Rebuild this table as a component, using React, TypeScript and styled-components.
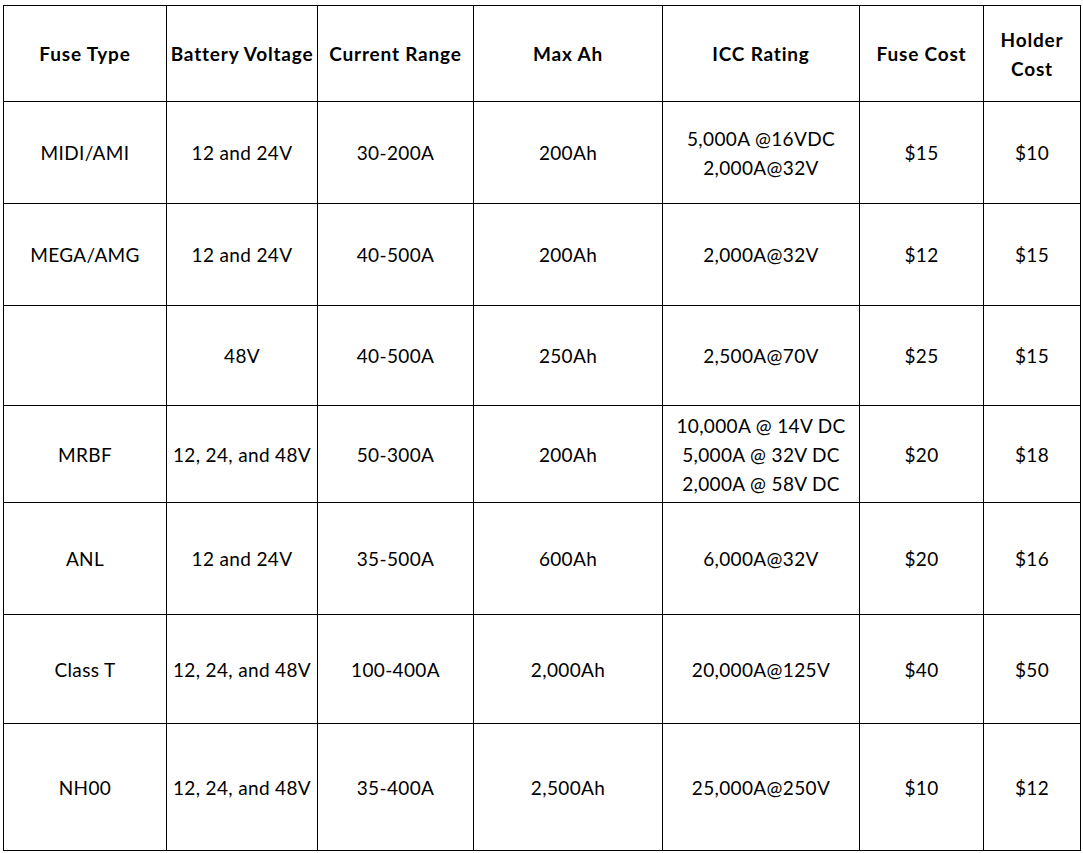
import styled, { createGlobalStyle } from "styled-components";

const GlobalStyle = createGlobalStyle`
  html, body {
    margin: 0;
    padding: 0;
    background: #ffffff;
  }
`;

type Row = {
  height: number;
  cells: string[][];
};

const widths = [163, 151, 156, 189, 197, 124, 97];

const header = [
  ["Fuse Type"],
  ["Battery Voltage"],
  ["Current Range"],
  ["Max Ah"],
  ["ICC Rating"],
  ["Fuse Cost"],
  ["Holder", "Cost"],
];

const rows: Row[] = [
  {
    height: 102,
    cells: [
      ["MIDI/AMI"],
      ["12 and 24V"],
      ["30-200A"],
      ["200Ah"],
      ["5,000A @16VDC", "2,000A@32V"],
      ["$15"],
      ["$10"],
    ],
  },
  {
    height: 102,
    cells: [
      ["MEGA/AMG"],
      ["12 and 24V"],
      ["40-500A"],
      ["200Ah"],
      ["2,000A@32V"],
      ["$12"],
      ["$15"],
    ],
  },
  {
    height: 100,
    cells: [
      [""],
      ["48V"],
      ["40-500A"],
      ["250Ah"],
      ["2,500A@70V"],
      ["$25"],
      ["$15"],
    ],
  },
  {
    height: 97,
    cells: [
      ["MRBF"],
      ["12, 24, and 48V"],
      ["50-300A"],
      ["200Ah"],
      ["10,000A @ 14V DC", "5,000A @ 32V DC", "2,000A @ 58V DC"],
      ["$20"],
      ["$18"],
    ],
  },
  {
    height: 112,
    cells: [
      ["ANL"],
      ["12 and 24V"],
      ["35-500A"],
      ["600Ah"],
      ["6,000A@32V"],
      ["$20"],
      ["$16"],
    ],
  },
  {
    height: 109,
    cells: [
      ["Class T"],
      ["12, 24, and 48V"],
      ["100-400A"],
      ["2,000Ah"],
      ["20,000A@125V"],
      ["$40"],
      ["$50"],
    ],
  },
  {
    height: 127,
    cells: [
      ["NH00"],
      ["12, 24, and 48V"],
      ["35-400A"],
      ["2,500Ah"],
      ["25,000A@250V"],
      ["$10"],
      ["$12"],
    ],
  },
];

const App = () => {
  return (
    <>
      <GlobalStyle />
      <Page>
        <Table>
          <colgroup>
            {widths.map((w, i) => (
              <Col key={i} $width={w} />
            ))}
          </colgroup>
          <thead>
            <TableRow $height={96}>
              {header.map((lines, c) => (
                <HeadCell key={c}>
                  {lines.map((line, l) => (
                    <Line key={l}>{line}</Line>
                  ))}
                </HeadCell>
              ))}
            </TableRow>
          </thead>
          <tbody>
            {rows.map((row, r) => (
              <TableRow key={r} $height={row.height}>
                {row.cells.map((lines, c) => (
                  <Cell key={c}>
                    {lines.map((line, l) => (
                      <Line key={l}>{line}</Line>
                    ))}
                  </Cell>
                ))}
              </TableRow>
            ))}
          </tbody>
        </Table>
      </Page>
    </>
  );
};

export default App;

const Page = styled.div`
  padding: 5px 0 0 3px;
  font-family: Lato, "Open Sans", sans-serif;
  color: #000000;
`;

const Table = styled.table`
  border-collapse: collapse;
  table-layout: fixed;
  width: 1077px;
`;

const Col = styled.col<{ $width: number }>`
  width: ${({ $width }) => $width}px;
`;

const TableRow = styled.tr<{ $height: number }>`
  height: ${({ $height }) => $height}px;
`;

const HeadCell = styled.th`
  border: 1px solid #000000;
  padding: 0;
  text-align: center;
  vertical-align: middle;
  font-size: 19px;
  font-weight: 700;
  letter-spacing: 0.8px;
  line-height: 29px;
  white-space: nowrap;
`;

const Cell = styled.td`
  border: 1px solid #000000;
  padding: 0;
  text-align: center;
  vertical-align: middle;
  font-size: 19px;
  font-weight: 400;
  letter-spacing: 0.35px;
  line-height: 29px;
  white-space: nowrap;
`;

const Line = styled.div`
  min-height: 29px;
`;
